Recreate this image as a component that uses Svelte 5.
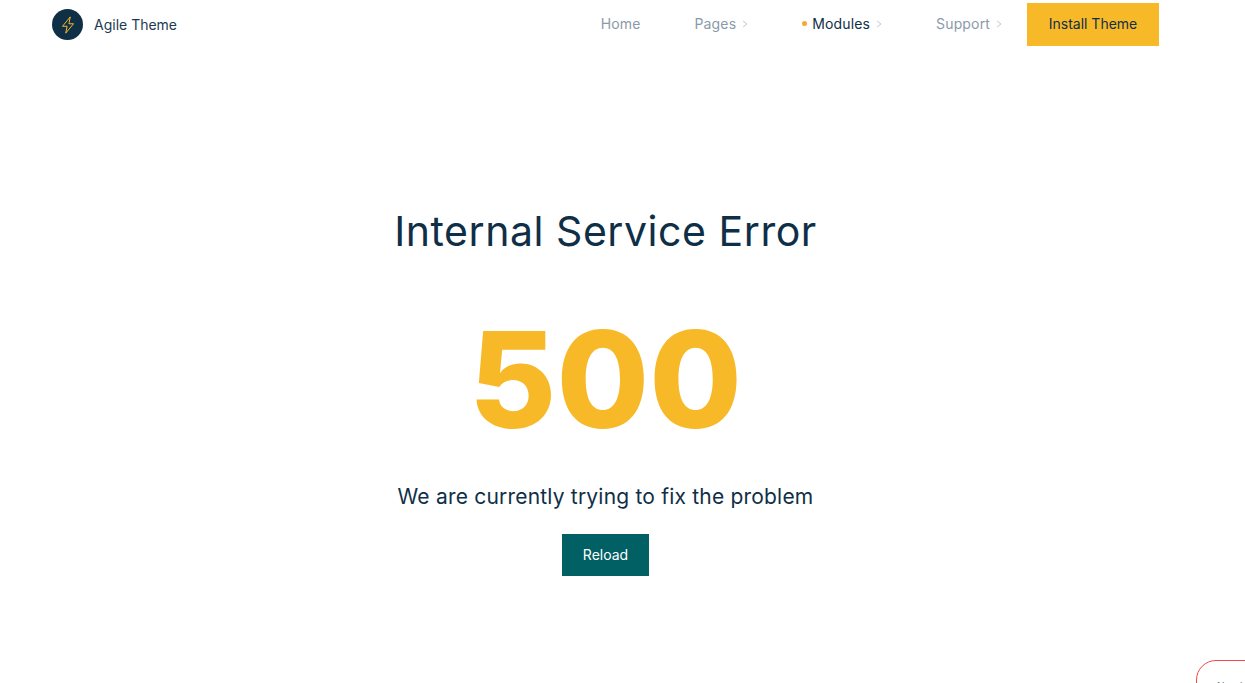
<script>
	const links = [
		{ label: 'Home' },
		{ label: 'Pages', arrow: true },
		{ label: 'Modules', arrow: true, active: true },
		{ label: 'Support', arrow: true }
	];
</script>

<div class="page">
	<header class="topbar">
		<a class="brand" href="#top">
			<span class="logo">
				<svg viewBox="0 0 16 16" width="20" height="20" fill="none" stroke="#f7b928" stroke-width="0.8" stroke-linejoin="round">
					<path d="M9.8 1.5 3.6 9h3.7l-1.1 5.5L12.4 7H8.7z" />
				</svg>
			</span>
			<span>Agile Theme</span>
		</a>
		<nav class="links">
			{#each links as link}
				<a class="link" class:active={link.active} href="#top">
					{#if link.active}<span class="dot"></span>{/if}
					{link.label}
					{#if link.arrow}
						<svg viewBox="0 0 8 10" width="6" height="8" fill="none" stroke="currentColor" stroke-width="1">
							<path d="M1.5 1 6.5 5l-5 4" />
						</svg>
					{/if}
				</a>
			{/each}
			<a class="install" href="#top">Install Theme</a>
		</nav>
	</header>

	<main class="error">
		<h1>Internal Service Error</h1>
		<div class="code">500</div>
		<p>We are currently trying to fix the problem</p>
		<button type="button">Reload</button>
	</main>
</div>

<aside class="help"><span>Need</span></aside>

<style>
	:global(body) {
		background: #fff;
		color: #0f2f47;
		font-family: 'Inter', 'Liberation Sans', sans-serif;
		overflow: hidden;
	}

	.page {
		box-sizing: border-box;
		width: 1211px;
		height: 683px;
		padding: 0 52px;
	}

	a {
		color: inherit;
		text-decoration: none;
	}

	.topbar {
		display: flex;
		justify-content: space-between;
		align-items: center;
		padding-top: 3px;
		height: 43px;
	}

	.brand {
		display: flex;
		align-items: center;
		gap: 11px;
		font-size: 14px;
		color: #1b3a52;
	}

	.logo {
		display: flex;
		justify-content: center;
		align-items: center;
		width: 31px;
		height: 31px;
		border-radius: 50%;
		background: #0f2f47;
	}

	.links {
		display: flex;
		align-items: center;
		height: 100%;
	}

	.link {
		display: flex;
		align-items: center;
		gap: 6px;
		padding: 0 25px 2px 29px;
		font-size: 14px;
		letter-spacing: 0.15px;
		color: #8b9aa8;
		white-space: nowrap;
	}

	.link svg {
		color: #a9b3bd;
	}

	.link.active {
		color: #0f2f47;
	}

	.dot {
		width: 5px;
		height: 5px;
		margin-right: -1px;
		border-radius: 50%;
		background: #f7a928;
	}

	.install {
		display: flex;
		align-items: center;
		justify-content: center;
		box-sizing: border-box;
		width: 132px;
		height: 43px;
		padding-bottom: 2px;
		background: #f7b928;
		color: #0f2f47;
		font-size: 14px;
	}

	.error {
		display: flex;
		flex-direction: column;
		align-items: center;
		padding-top: 157px;
		color: #0f2f47;
	}

	h1 {
		margin: 0;
		font-size: 41px;
		font-weight: 400;
		line-height: 56px;
		letter-spacing: 0.55px;
	}

	.code {
		margin-top: 40px;
		font-size: 134px;
		font-weight: 800;
		line-height: 160px;
		color: #f7b928;
	}

	p {
		margin: 23px 0 0;
		font-size: 21px;
		line-height: 30px;
		letter-spacing: 0.2px;
	}

	button {
		margin-top: 22px;
		width: 87px;
		height: 42px;
		padding: 0 0 2px;
		border: 0;
		background: #006064;
		color: #fff;
		font: inherit;
		font-size: 14px;
	}

	.help {
		position: fixed;
		left: 1196px;
		top: 660px;
		width: 80px;
		height: 60px;
		box-sizing: border-box;
		border: 1px solid #f0484c;
		border-radius: 20px;
		background: #fff;
		font-size: 10px;
		color: #66707a;
		padding: 19px 0 0 20px;
	}
</style>
